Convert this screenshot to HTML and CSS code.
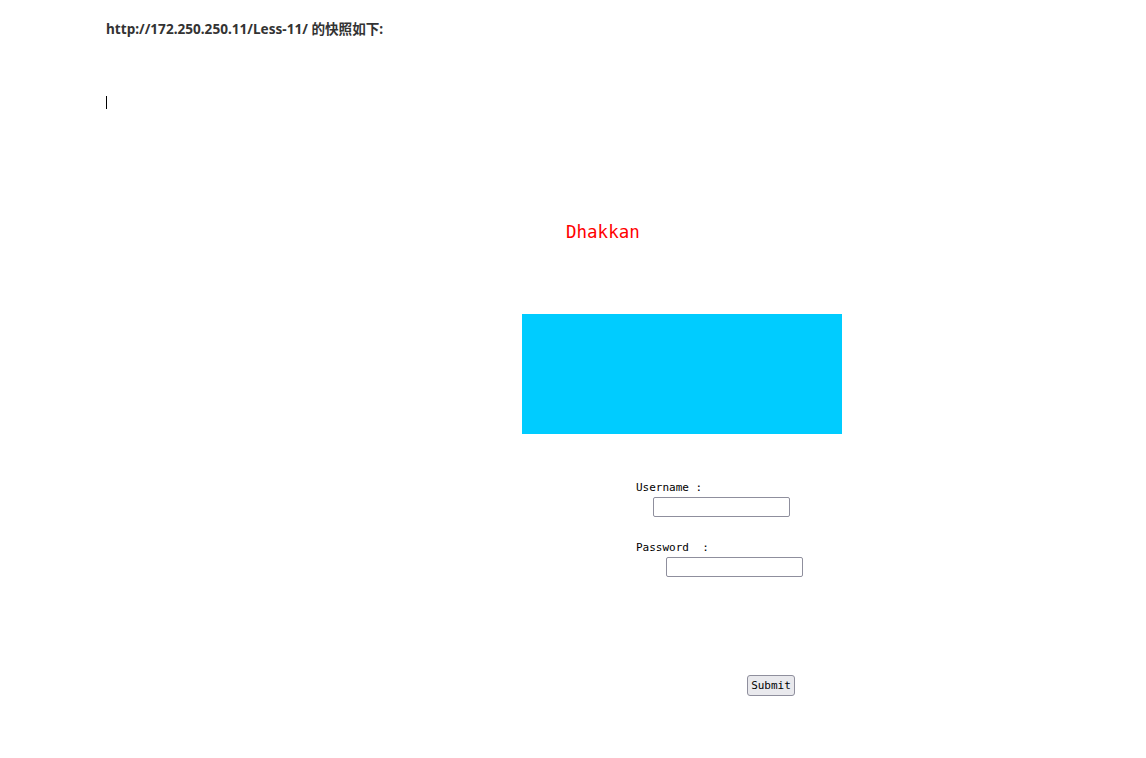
FILE: index.html
```html
<!DOCTYPE html>
<html lang="zh">
<head>
<meta charset="utf-8">
<title>Less-11 snapshot</title>
<link rel="stylesheet" href="styles.css">
</head>
<body>
<div class="doc">
  <p class="heading">http://172.250.250.11/Less-11/ 的快照如下:</p>
  <div class="caret"></div>
</div>
<div class="stage">
  <div class="brand">Dhakkan</div>
  <div class="banner"></div>
  <form class="login">
    <div class="label">Username :</div>
    <input class="field field-user" type="text">
    <div class="label label-pass">Password&nbsp;&nbsp;:</div>
    <input class="field field-pass" type="password">
    <button class="submit" type="button">Submit</button>
  </form>
</div>
</body>
</html>
```
FILE: styles.css
```css
html, body {
  margin: 0;
  padding: 0;
  background: #ffffff;
}

body {
  width: 1146px;
  height: 758px;
  overflow: hidden;
  font-family: "Noto Sans", "Noto Sans CJK SC", sans-serif;
}

.doc {
  padding: 19px 0 0 106px;
}

.heading {
  margin: 0;
  font-size: 13.6px;
  line-height: 20px;
  font-weight: 700;
  color: #333333;
}

.caret {
  margin-top: 57px;
  width: 1px;
  height: 13px;
  background: #000000;
}

.stage {
  display: flex;
  flex-direction: column;
  align-items: flex-start;
}

.brand {
  margin: 113px 0 0 566px;
  font-family: "DejaVu Sans Mono", monospace;
  font-size: 17.5px;
  line-height: 20px;
  color: #ff0000;
}

.banner {
  margin: 72px 0 0 522px;
  width: 320px;
  height: 120px;
  background: #00ccff;
}

.login {
  display: flex;
  flex-direction: column;
  align-items: flex-start;
  margin: 0;
}

.label {
  margin: 47px 0 0 636px;
  font-family: "DejaVu Sans Mono", monospace;
  font-size: 11px;
  line-height: 13px;
  color: #000000;
  white-space: pre;
}

.label-pass {
  margin-top: 24px;
}

.field {
  box-sizing: border-box;
  width: 137px;
  height: 20px;
  padding: 1px 2px;
  border: 1px solid #8f8f9d;
  border-radius: 2px;
  background: #ffffff;
  font-size: 11px;
}

.field-user {
  margin: 3px 0 0 653px;
}

.field-pass {
  margin: 3px 0 0 666px;
}

.submit {
  box-sizing: border-box;
  margin: 98px 0 0 747px;
  width: 48px;
  height: 21px;
  padding: 0;
  border: 1px solid #8f8f9d;
  border-radius: 3px;
  background: #e9e9ed;
  font-family: "DejaVu Sans Mono", monospace;
  font-size: 11px;
  color: #000000;
}
```
